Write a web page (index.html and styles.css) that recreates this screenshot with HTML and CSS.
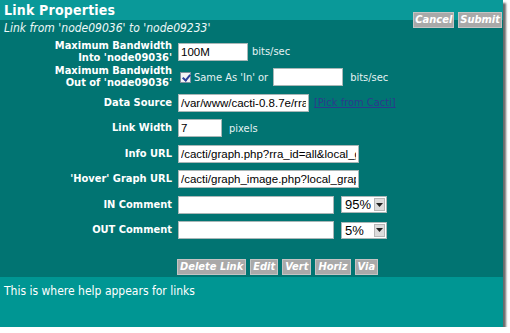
FILE: index.html
```html
<!DOCTYPE html>
<html lang="en">
<head>
    <meta charset="UTF-8">
    <title>Link Properties</title>
    <link rel="stylesheet" href="styles.css">
</head>
<body>
    <div class="panel">
        <div class="titlebar">
            <h1>Link Properties</h1>
            <div class="actions">
                <button class="btn">Cancel</button>
                <button class="btn">Submit</button>
            </div>
        </div>
        <div class="main">
            <p class="subtitle">Link from 'node09036' to 'node09233'</p>
            <div class="form">
                <label>Maximum Bandwidth<br>Into 'node09036'</label>
                <div class="field">
                    <input class="bw" type="text" value="100M">
                    <span class="unit">bits/sec</span>
                </div>

                <label>Maximum Bandwidth<br>Out of 'node09036'</label>
                <div class="field">
                    <input class="check" type="checkbox" checked>
                    <span class="unit same">Same As 'In' or</span>
                    <input class="bw" type="text" value="">
                    <span class="unit wide">bits/sec</span>
                </div>

                <label>Data Source</label>
                <div class="field">
                    <input class="source" type="text" value="/var/www/cacti-0.8.7e/rra/traffic_in_1234.rrd">
                    <a class="pick" href="#">[Pick from Cacti]</a>
                </div>

                <label>Link Width</label>
                <div class="field">
                    <input class="linkwidth" type="text" value="7">
                    <span class="unit wide">pixels</span>
                </div>

                <label>Info URL</label>
                <div class="field">
                    <input class="url" type="text" value="/cacti/graph.php?rra_id=all&amp;local_graph_id=1234">
                </div>

                <label>'Hover' Graph URL</label>
                <div class="field">
                    <input class="url" type="text" value="/cacti/graph_image.php?local_graph_id=1234">
                </div>

                <label>IN Comment</label>
                <div class="field">
                    <input class="comment" type="text" value="">
                    <span class="pick-pos">
                        <select class="pos">
                            <option>95%</option>
                            <option>5%</option>
                        </select>
                        <span class="arrow"><svg width="7" height="4" viewBox="0 0 7 4"><path d="M0 0h7L3.5 4z" fill="#222"/></svg></span>
                    </span>
                </div>

                <label>OUT Comment</label>
                <div class="field">
                    <input class="comment" type="text" value="">
                    <span class="pick-pos">
                        <select class="pos">
                            <option>5%</option>
                            <option>95%</option>
                        </select>
                        <span class="arrow"><svg width="7" height="4" viewBox="0 0 7 4"><path d="M0 0h7L3.5 4z" fill="#222"/></svg></span>
                    </span>
                </div>
            </div>
            <div class="tools">
                <button class="btn">Delete Link</button>
                <button class="btn">Edit</button>
                <button class="btn">Vert</button>
                <button class="btn">Horiz</button>
                <button class="btn">Via</button>
            </div>
        </div>
        <div class="help">This is where help appears for links</div>
    </div>
</body>
</html>
```

FILE: styles.css
```css
body {
    margin: 0;
    padding: 0;
    background-color: #ffffff;
    font-family: "DejaVu Sans Condensed", "DejaVu Sans", sans-serif;
}

.panel {
    width: 503px;
    height: 327px;
    display: flex;
    flex-direction: column;
    box-shadow: 3px 3px 2px #6a6a6a;
}

.titlebar {
    height: 20px;
    flex-shrink: 0;
    display: flex;
    justify-content: space-between;
    align-items: flex-start;
    background-color: #0a9999;
}

h1 {
    margin: 0;
    padding: 2px 0 0 4px;
    font-size: 14px;
    line-height: 16px;
    letter-spacing: 0.2px;
    font-weight: bold;
    color: #ffffff;
}

.actions {
    position: relative;
    z-index: 1;
    display: flex;
    gap: 4px;
    margin-top: 12px;
    margin-right: 1px;
}

.btn {
    height: 16px;
    padding: 0 2px;
    font-family: "DejaVu Sans Condensed", "DejaVu Sans", sans-serif;
    font-size: 11px;
    font-weight: bold;
    font-style: italic;
    line-height: 14px;
    color: #ffffff;
    background-color: #a9a9a9;
    border: 1px solid #c4c4c4;
    border-radius: 0;
    cursor: pointer;
}

.actions .btn {
    padding: 0 1px;
}

.main {
    flex: 1;
    background-color: #017472;
    color: #ffffff;
}

.subtitle {
    margin: 0;
    padding: 1px 0 0 4px;
    height: 18px;
    font-size: 12px;
    line-height: 15px;
    font-style: italic;
    color: #eef8f8;
}

.form {
    display: grid;
    grid-template-columns: 172px auto;
    column-gap: 6px;
    grid-auto-rows: 25.5px;
    align-items: center;
}

.form label {
    text-align: right;
    font-size: 11px;
    line-height: 12px;
    font-weight: bold;
    color: #ffffff;
}

.field {
    display: flex;
    align-items: center;
}

.field input[type="text"] {
    box-sizing: border-box;
    height: 18px;
    padding: 0 2px;
    border: 1px solid #a9b7b7;
    background-color: #ffffff;
    font-family: "Liberation Sans", Arial, sans-serif;
    font-size: 11.5px;
    color: #000000;
    outline: none;
}

.bw {
    width: 70px;
}

.source {
    width: 131px;
}

.linkwidth {
    width: 44px;
}

.url {
    width: 181px;
}

.comment {
    width: 156px;
}

.unit {
    margin-left: 4px;
    font-size: 11px;
    color: #e6f2f2;
}

.unit.wide {
    margin-left: 7px;
}

.unit.same {
    margin-left: 3px;
    margin-right: 5px;
}

.check {
    -webkit-appearance: none;
    appearance: none;
    box-sizing: border-box;
    width: 11px;
    height: 11px;
    margin: 0 0 0 2px;
    border: 1px solid #7f8f9f;
    border-radius: 0;
    background-color: #f4f4f4;
    position: relative;
}

.check:checked::after {
    content: "";
    position: absolute;
    left: 3px;
    top: 0px;
    width: 3px;
    height: 6px;
    border: solid #2a3f9a;
    border-width: 0 2px 2px 0;
    transform: rotate(40deg);
}

.pick {
    margin-left: 5px;
    font-size: 11px;
    color: #2b3a8c;
}

.pick-pos {
    position: relative;
    margin-left: 7px;
    display: flex;
}

.pos {
    appearance: none;
    box-sizing: border-box;
    width: 46px;
    height: 17px;
    padding: 0 0 0 3px;
    border: 1px solid #a9b7b7;
    border-radius: 0;
    background-color: #ffffff;
    font-family: "Liberation Sans", Arial, sans-serif;
    font-size: 13px;
    color: #000000;
}

.arrow {
    position: absolute;
    right: 2px;
    top: 2px;
    width: 11px;
    height: 13px;
    display: flex;
    align-items: center;
    justify-content: center;
    background-color: #dcdcdc;
    border: 1px solid #b8b8b8;
    box-sizing: border-box;
}

.tools {
    display: flex;
    gap: 4px;
    margin: 16px 0 0 177px;
}

.help {
    height: 50px;
    flex-shrink: 0;
    padding: 7px 4px 0;
    box-sizing: border-box;
    background-color: #009693;
    font-size: 12px;
    color: #ffffff;
}
```
